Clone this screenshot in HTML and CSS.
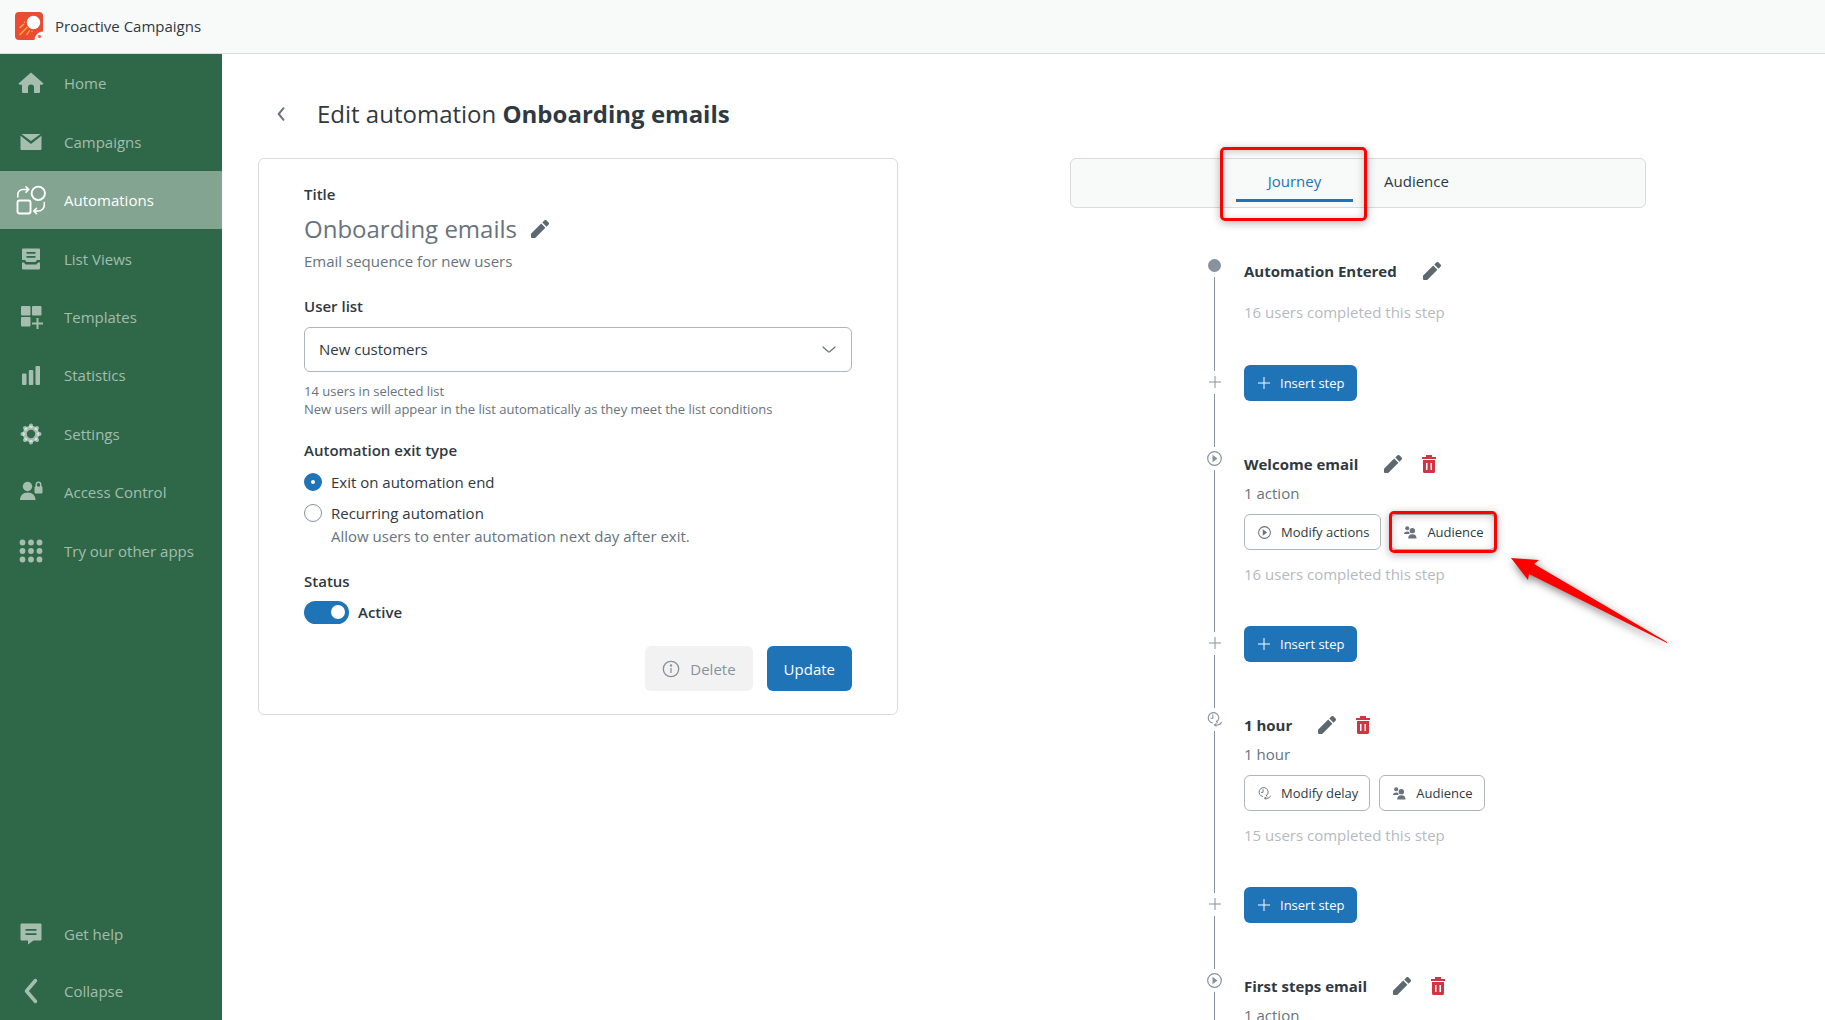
FILE: index.html
```html
<!DOCTYPE html>
<html lang="en">
<head>
<meta charset="utf-8">
<meta name="viewport" content="width=device-width, initial-scale=1">
<title>Edit automation – Proactive Campaigns</title>
<link rel="stylesheet" href="styles.css">
</head>
<body>
<svg class="sprite" aria-hidden="true">
  <symbol id="i-pencil" viewBox="0 0 18 18"><path d="M0 13.800 10.200 3.600l4.200 4.200L4.200 18H1a1 1 0 0 1-1-1zM11.300 2.500l2-2a1.600 1.600 0 0 1 2.300 0l1.900 1.900a1.600 1.600 0 0 1 0 2.300l-2 2z"/></symbol>
  <symbol id="i-trash" viewBox="0 0 14 18"><path fill-rule="evenodd" d="M4 0h6v2h4v2H0V2h4zM1 5h12v11.500a1.500 1.500 0 0 1-1.500 1.500h-9A1.500 1.500 0 0 1 1 16.500zM4 8v7h1.500V8zm4.500 0v7H10V8z"/></symbol>
  <symbol id="i-play" viewBox="0 0 15 15"><circle cx="7.500" cy="7.500" r="6.800" fill="none" stroke="currentColor" stroke-width="1.200"/><path d="M5.500 3.800v7.400l5-3.700z"/></symbol>
  <symbol id="i-delay" viewBox="0 0 15 15"><g fill="none" stroke="currentColor" stroke-width="1.100"><path d="M10 9.700A5.200 5.200 0 1 0 5.800 11"/><path d="M5.800 2.500v3.700H3.500M9.200 8.800l1.300 2.200M7.500 13h2.700c2.300 0 3.600-1 4.300-3"/><path d="M9.500 11.500 7.500 13l2 1.300"/></g></symbol>
  <symbol id="i-people" viewBox="0 0 14 14"><circle cx="3.500" cy="2.500" r="2.200"/><path d="M0 8.500c0-1.800 1.300-2.700 3.500-2.700 1 0 1.700.2 2.300.6v2.100z"/><circle cx="9" cy="5" r="2.900"/><path d="M4.500 13.500C4.500 10.700 6 9 9 9s4.500 1.700 4.500 4.500z"/></symbol>
  <symbol id="i-plus" viewBox="0 0 12 12"><path d="M6 0v12M0 6h12" fill="none" stroke="currentColor"/></symbol>
</svg>

<header class="topbar">
  <svg class="logo" viewBox="0 0 28 28" aria-hidden="true">
    <rect width="28" height="28" rx="4" fill="#eb4a33"/>
    <circle cx="18.500" cy="10.500" r="6.700" fill="#fff"/>
    <g stroke="#fbb03b" stroke-width="1.400" stroke-linecap="round"><path d="M5 15.500 8.500 12.500M5 22.500l7-7M12 22.500l2.500-4M9.500 10.200v.2M17 19.300v.2"/></g>
    <path d="M19.500 28a8.500 8.500 0 0 1 8.500-8.500V28z" fill="#fff"/>
    <circle cx="24.500" cy="24.500" r="1.700" fill="#ee6a6a"/>
  </svg>
  <span class="product">Proactive Campaigns</span>
</header>

<div class="shell">
  <nav class="sidebar" aria-label="Main">
    <div class="nav-group nav-main">
      <a href="#" class="nav-item"><svg viewBox="0 0 30 30"><path d="M15 4.500 2.500 15.500l1 1.200H6V24a1 1 0 0 0 1 1h5v-5.500a3 3 0 0 1 6 0V25h5a1 1 0 0 0 1-1v-7.300h2.500l1-1.200z"/></svg>Home</a>
      <a href="#" class="nav-item"><svg viewBox="0 0 30 30"><path d="M5.500 7h19L15 14z"/><path d="M4.500 8.700 15 17l10.500-8.300V22a1 1 0 0 1-1 1h-19a1 1 0 0 1-1-1z"/></svg>Campaigns</a>
      <a href="#" class="nav-item active" aria-current="page"><svg viewBox="0 0 30 30"><g fill="none" stroke="currentColor" stroke-width="1.900" stroke-linecap="round" stroke-linejoin="round"><circle cx="22.300" cy="8.300" r="6.700"/><rect x="1.500" y="15.500" width="13" height="13" rx="2"/><path stroke-width="1.600" d="M1.800 12V9.500a5 5 0 0 1 5-5h5.500M10 1.800l2.800 2.700L10 7.200M28.300 17.500V20a6 6 0 0 1-6 6h-4.500M20.500 23.300 17.700 26l2.800 2.600"/></g></svg>Automations</a>
      <a href="#" class="nav-item"><svg viewBox="0 0 30 30"><path fill-rule="evenodd" d="M7 4.500h16a1 1 0 0 1 1 1V16h-3l-1.500 2h-9L9 16H6V5.500a1 1 0 0 1 1-1zM10.500 8v1.700h9V8zm0 4v1.700h9V12z"/><path d="M6 18.500h2l1.500 2h11l1.500-2h2v6a1 1 0 0 1-1 1H7a1 1 0 0 1-1-1z"/></svg>List Views</a>
      <a href="#" class="nav-item"><svg viewBox="0 0 30 30"><rect x="5" y="4" width="9.500" height="9.500" rx="1"/><rect x="16" y="4" width="9.500" height="9.500" rx="1"/><rect x="5" y="15" width="9.500" height="9.500" rx="1"/><path d="M21.500 16v11M16 21.500h11" stroke="currentColor" stroke-width="2"/></svg>Templates</a>
      <a href="#" class="nav-item"><svg viewBox="0 0 30 30"><rect x="6" y="13.500" width="4.500" height="11.500" rx="1"/><rect x="12.800" y="10" width="4.500" height="15" rx="1"/><rect x="19.500" y="6" width="4.500" height="19" rx="1"/></svg>Statistics</a>
      <a href="#" class="nav-item"><svg viewBox="0 0 30 30"><circle cx="15" cy="15" r="6.200" fill="none" stroke="currentColor" stroke-width="4"/><g stroke="currentColor" stroke-width="4" stroke-linecap="round"><path d="M15 7V6.500M15 23.500V23M7 15h-.5M23.500 15H23M9.400 9.400 9 9M21 21l-.4-.4M9.400 20.600 9 21M21 9l-.4.4" /></g></svg>Settings</a>
      <a href="#" class="nav-item"><svg viewBox="0 0 30 30"><circle cx="11.500" cy="9.500" r="4.700"/><path d="M4 23c0-4.500 3-7.500 7.700-7.500S19.500 18.500 19.500 23z"/><rect x="18.500" y="9.500" width="8" height="7" rx="1"/><path d="M20.300 10V7.500a2.200 2.200 0 0 1 4.400 0V10" fill="none" stroke="currentColor" stroke-width="1.500"/></svg>Access Control</a>
      <a href="#" class="nav-item"><svg viewBox="0 0 30 30"><circle cx="6.500" cy="6.500" r="2.900"/><circle cx="15" cy="6.500" r="2.900"/><circle cx="23.500" cy="6.500" r="2.900"/><circle cx="6.500" cy="15" r="2.900"/><circle cx="15" cy="15" r="2.900"/><circle cx="23.500" cy="15" r="2.900"/><circle cx="6.500" cy="23.500" r="2.900"/><circle cx="15" cy="23.500" r="2.900"/><circle cx="23.500" cy="23.500" r="2.900"/></svg>Try our other apps</a>
    </div>
    <div class="nav-group nav-foot">
      <a href="#" class="nav-item"><svg viewBox="0 0 30 30"><path fill-rule="evenodd" d="M5.500 4.500h19a1 1 0 0 1 1 1v15a1 1 0 0 1-1 1H17.500L12 25.500v-4H5.500a1 1 0 0 1-1-1v-15a1 1 0 0 1 1-1zM9.500 10v1.800h11V10zm0 4.200V16h11v-1.800z"/></svg>Get help</a>
      <button type="button" class="nav-item"><svg viewBox="0 0 30 30"><path d="M19.500 4.500 10.500 15l9 10.500" fill="none" stroke="currentColor" stroke-width="3.500" stroke-linecap="round" stroke-linejoin="round"/></svg>Collapse</button>
    </div>
  </nav>

  <main class="content">
    <div class="page-head">
      <button type="button" class="back" aria-label="Back"><svg viewBox="0 0 8 14"><path d="M6.500 1.200 1.700 7l4.800 5.800" fill="none" stroke="currentColor" stroke-width="2" stroke-linecap="round"/></svg></button>
      <h1>Edit automation <strong>Onboarding emails</strong></h1>
    </div>

    <div class="columns">
      <form class="card">
        <h2 class="label">Title</h2>
        <div class="name-row">
          <span class="name">Onboarding emails</span>
          <button type="button" class="icon-btn" aria-label="Edit title"><svg class="pencil"><use href="#i-pencil"/></svg></button>
        </div>
        <p class="description">Email sequence for new users</p>

        <label class="label" for="user-list">User list</label>
        <div class="select-wrap">
          <select id="user-list"><option>New customers</option></select>
          <svg class="chevron" viewBox="0 0 14 8" aria-hidden="true"><path d="M1 1l5 4.500q1 .8 2 0L13 1" fill="none" stroke="currentColor" stroke-width="1.200" stroke-linecap="round"/></svg>
        </div>
        <p class="hint">14 users in selected list<br>New users will appear in the list automatically as they meet the list conditions</p>

        <fieldset class="group">
          <legend class="label">Automation exit type</legend>
          <label class="radio"><input type="radio" name="exit" checked>Exit on automation end</label>
          <label class="radio"><input type="radio" name="exit">Recurring automation</label>
          <p class="radio-hint">Allow users to enter automation next day after exit.</p>
        </fieldset>

        <h2 class="label">Status</h2>
        <label class="switch"><input type="checkbox" role="switch" checked>Active</label>

        <div class="actions">
          <button type="button" class="btn btn-muted" disabled><svg viewBox="0 0 18 18"><circle cx="9" cy="9" r="7.700" fill="none" stroke="currentColor" stroke-width="1.300"/><path d="M9 8v5" stroke="currentColor" stroke-width="1.300"/><circle cx="9" cy="5.500" r="1.200"/></svg>Delete</button>
          <button type="submit" class="btn btn-primary">Update</button>
        </div>
      </form>

      <section class="journey">
        <div class="tabs" role="tablist">
          <button type="button" role="tab" class="tab selected" aria-selected="true">Journey<span class="callout callout-tab"></span></button>
          <button type="button" role="tab" class="tab" aria-selected="false">Audience</button>
        </div>

        <ol class="timeline">
          <li class="step first">
            <div class="rail"><span class="marker"><span class="dot"></span></span></div>
            <div class="body">
              <div class="step-head"><h3>Automation Entered</h3><button type="button" class="icon-btn" aria-label="Edit"><svg class="pencil"><use href="#i-pencil"/></svg></button></div>
              <p class="done">16 users completed this step</p>
            </div>
          </li>
          <li class="insert">
            <div class="rail"><span class="marker"><svg class="plus"><use href="#i-plus"/></svg></span></div>
            <div class="body"><button type="button" class="btn-sm btn-primary"><svg><use href="#i-plus"/></svg>Insert step</button></div>
          </li>
          <li class="step">
            <div class="rail"><span class="marker"><svg><use href="#i-play"/></svg></span></div>
            <div class="body">
              <div class="step-head"><h3>Welcome email</h3><button type="button" class="icon-btn" aria-label="Edit"><svg class="pencil"><use href="#i-pencil"/></svg></button><button type="button" class="icon-btn" aria-label="Delete"><svg class="trash"><use href="#i-trash"/></svg></button></div>
              <p class="detail">1 action</p>
              <div class="step-actions">
                <button type="button" class="btn-sm btn-outline"><svg><use href="#i-play"/></svg>Modify actions</button>
                <div class="highlighted">
                  <button type="button" class="btn-sm btn-outline"><svg><use href="#i-people"/></svg>Audience</button>
                  <span class="callout callout-button"></span>
                  <svg class="arrow" viewBox="0 0 170 100" aria-hidden="true"><path d="M6 4 34 6l-5 4L162 88v1L24 20l-1 6z"/></svg>
                </div>
              </div>
              <p class="done">16 users completed this step</p>
            </div>
          </li>
          <li class="insert">
            <div class="rail"><span class="marker"><svg class="plus"><use href="#i-plus"/></svg></span></div>
            <div class="body"><button type="button" class="btn-sm btn-primary"><svg><use href="#i-plus"/></svg>Insert step</button></div>
          </li>
          <li class="step">
            <div class="rail"><span class="marker"><svg><use href="#i-delay"/></svg></span></div>
            <div class="body">
              <div class="step-head"><h3>1 hour</h3><button type="button" class="icon-btn" aria-label="Edit"><svg class="pencil"><use href="#i-pencil"/></svg></button><button type="button" class="icon-btn" aria-label="Delete"><svg class="trash"><use href="#i-trash"/></svg></button></div>
              <p class="detail">1 hour</p>
              <div class="step-actions">
                <button type="button" class="btn-sm btn-outline"><svg><use href="#i-delay"/></svg>Modify delay</button>
                <button type="button" class="btn-sm btn-outline"><svg><use href="#i-people"/></svg>Audience</button>
              </div>
              <p class="done">15 users completed this step</p>
            </div>
          </li>
          <li class="insert">
            <div class="rail"><span class="marker"><svg class="plus"><use href="#i-plus"/></svg></span></div>
            <div class="body"><button type="button" class="btn-sm btn-primary"><svg><use href="#i-plus"/></svg>Insert step</button></div>
          </li>
          <li class="step">
            <div class="rail"><span class="marker"><svg><use href="#i-play"/></svg></span></div>
            <div class="body">
              <div class="step-head"><h3>First steps email</h3><button type="button" class="icon-btn" aria-label="Edit"><svg class="pencil"><use href="#i-pencil"/></svg></button><button type="button" class="icon-btn" aria-label="Delete"><svg class="trash"><use href="#i-trash"/></svg></button></div>
              <p class="detail">1 action</p>
            </div>
          </li>
        </ol>
      </section>
    </div>
  </main>
</div>
</body>
</html>
```
FILE: styles.css
```css
:root {
  --blue: #1f73b7;
  --ink: #2f3941;
  --grey: #68737d;
  --mid: #87929d;
  --line: #d8dcde;
  --green: #2f6848;
  --danger: #d13443;
  --callout: #ff0000;
}

* { box-sizing: border-box; }

body {
  margin: 0;
  height: 100vh;
  display: flex;
  flex-direction: column;
  overflow: hidden;
  background: #fff;
  color: var(--ink);
  font: 15px/24px "Open Sans", "Noto Sans", sans-serif;
}

h1, h2, h3, p, ol, fieldset { margin: 0; padding: 0; border: 0; }
button, select { font: inherit; color: inherit; }
button { cursor: pointer; }
svg { flex: none; fill: currentColor; }
.sprite { display: none; }

.topbar {
  flex: none;
  display: flex;
  align-items: center;
  gap: 12px;
  height: 54px;
  padding: 0 15px 2px;
  background: #f8f9f9;
  border-bottom: 1px solid var(--line);
}
.logo { width: 28px; height: 28px; }
.product { font-weight: 500; }

.shell { flex: 1; display: flex; min-height: 0; }

.sidebar {
  flex: none;
  width: 222px;
  display: flex;
  flex-direction: column;
  justify-content: space-between;
  background: var(--green);
}
.nav-group { display: grid; grid-auto-rows: 1fr; }
.nav-main { height: 526px; }
.nav-foot { height: 115px; }
.nav-item {
  display: flex;
  align-items: center;
  gap: 18px;
  padding: 0 16px;
  border: 0;
  background: none;
  color: rgba(255, 255, 255, 0.57);
  text-decoration: none;
}
.nav-item svg { width: 30px; height: 30px; }
.nav-item.active { background: #83a491; color: #fff; }

.content { flex: 1; min-width: 0; overflow: hidden; padding: 40px 7px 0 36px; }

.page-head { display: flex; align-items: center; gap: 32px; height: 40px; padding-left: 19px; margin-bottom: 24px; }
.back { display: flex; padding: 0; border: 0; background: none; color: var(--grey); }
.back svg { width: 8px; height: 14px; }
h1 { font-size: 24px; font-weight: 400; line-height: 40px; }
h1 strong { font-weight: 700; }

.columns { display: grid; grid-template-columns: minmax(0, 640px) minmax(0, 1fr); align-items: start; }

.card { border: 1px solid var(--line); border-radius: 6px; padding: 23px 45px; }
.label { display: block; padding: 0; font-size: 15px; line-height: 24px; font-weight: 600; }
.name-row { display: flex; align-items: center; gap: 14px; height: 38px; margin-top: 4px; }
.name { font-size: 24px; color: var(--grey); }
.description { color: var(--grey); margin: 1px 0 21px; }
.icon-btn { display: flex; padding: 0; border: 0; background: none; color: #5c6970; }
.pencil { width: 18px; height: 18px; }
.trash { width: 14px; height: 18px; color: var(--danger); }

.select-wrap { position: relative; margin-top: 9px; }
select {
  appearance: none;
  display: block;
  width: 100%;
  height: 45px;
  padding: 0 14px 2px;
  border: 1px solid #b0b5b9;
  border-radius: 6px;
  background: #fff;
}
.chevron { position: absolute; right: 16px; top: 19px; width: 14px; height: 8px; color: var(--grey); }
.hint { margin: 10px 0 20px; font-size: 13px; line-height: 18px; color: var(--grey); }

.radio { display: flex; align-items: center; gap: 9px; height: 31px; }
.label + .radio { margin-top: 4px; }
.radio input {
  appearance: none;
  width: 18px;
  height: 18px;
  margin: 0;
  border: 1px solid var(--mid);
  border-radius: 50%;
}
.radio input:checked { border: 7px solid var(--blue); }
.radio-hint { padding-left: 27px; margin-top: -4px; color: var(--grey); }
.group { margin-bottom: 21px; }

.switch { display: flex; align-items: center; gap: 9px; margin-top: 7px; font-weight: 600; }
.switch input {
  appearance: none;
  display: flex;
  align-items: center;
  justify-content: flex-end;
  width: 45px;
  height: 23px;
  margin: 0;
  padding: 0 4px;
  border-radius: 12px;
  background: var(--blue);
}
.switch input::before { content: ""; width: 14px; height: 14px; border-radius: 50%; background: #fff; }

.actions { display: flex; justify-content: flex-end; gap: 14px; margin-top: 22px; }
.btn { display: flex; align-items: center; gap: 10px; height: 45px; padding: 0 17px; border: 0; border-radius: 6px; }
.btn svg { width: 18px; height: 18px; }
.btn-primary { background: var(--blue); color: #fff; }
.btn-muted { background: #f2f2f2; color: var(--mid); }

.journey { width: 576px; max-width: 100%; justify-self: center; }
.tabs {
  display: flex;
  justify-content: center;
  height: 50px;
  border: 1px solid var(--line);
  border-radius: 6px;
  background: #f8f9f9;
}
.tab {
  position: relative;
  width: 117px;
  height: 43px;
  margin-right: 5px;
  padding: 3px 0 0;
  border: 0;
  border-bottom: 3px solid transparent;
  background: none;
}
.tab.selected { color: var(--blue); border-bottom-color: var(--blue); }

.callout {
  position: absolute;
  border: 3px solid var(--callout);
  border-radius: 5px;
  box-shadow: 0 2px 8px rgba(0, 0, 0, 0.3), inset 0 2px 8px rgba(0, 0, 0, 0.22);
  pointer-events: none;
}
.callout-tab { inset: -12px -14px -22px -16px; }
.callout-button { inset: -3px -1px; }

.timeline { list-style: none; margin-top: 46px; padding-left: 134px; }
.timeline li { display: flex; gap: 19px; }
.step { height: 185px; }
.step.first { height: 117px; }
.insert { height: 76px; }
.rail { display: flex; flex-direction: column; align-items: center; width: 21px; color: var(--mid); }
.rail::after { content: ""; flex: 1; width: 1px; margin-top: 1px; background: var(--mid); }
.marker { display: flex; align-items: center; justify-content: center; width: 21px; height: 22px; }
.marker svg { width: 15px; height: 15px; }
.marker .plus { width: 12px; height: 12px; }
.dot { width: 13px; height: 13px; border-radius: 50%; background: var(--mid); }
.insert .body { margin-top: -6px; }

.step-head { display: flex; align-items: center; height: 34px; }
h3 { font-size: 15px; font-weight: 700; margin-right: 26px; }
.step-head .icon-btn + .icon-btn { margin-left: 20px; }
.detail { color: var(--grey); }
.step-actions { display: flex; gap: 9px; margin-top: 9px; }
.done { margin-top: 12px; color: #b4babf; }

.btn-sm {
  display: flex;
  align-items: center;
  gap: 10px;
  height: 36px;
  padding: 0 11px 0 13px;
  border: 1px solid transparent;
  border-radius: 6px;
  font-size: 13px;
  white-space: nowrap;
}
.btn-sm svg { width: 13px; height: 13px; color: var(--grey); }
.btn-sm.btn-primary svg { color: #fff; width: 12px; height: 12px; }
.btn-outline { background: #fff; border-color: #b0b5b9; }

.highlighted { position: relative; }
.arrow {
  position: absolute;
  left: 115px;
  top: 40px;
  width: 170px;
  height: 100px;
  color: var(--callout);
  filter: drop-shadow(1px 3px 4px rgba(0, 0, 0, 0.5));
  overflow: visible;
}
```
